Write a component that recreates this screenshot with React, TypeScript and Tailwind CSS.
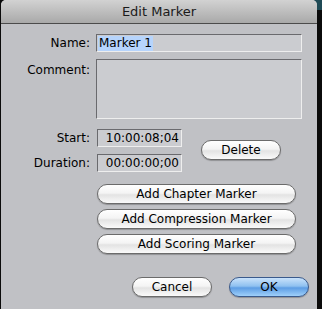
import React from 'react';

const font = { fontFamily: '"Lucida Grande", "DejaVu Sans", "Liberation Sans", sans-serif' };

function AquaButton({ label, width, primary }: { label: string; width: string; primary?: boolean }) {
  return (
    <button
      className={`${width} h-[20px] rounded-full border text-[12px] leading-none text-black flex items-center justify-center shadow-[0_1px_1px_rgba(0,0,0,0.25)] ${
        primary
          ? 'border-[#3a5a8c] bg-[linear-gradient(to_bottom,#c9e2fb_0%,#8fc1f0_45%,#5d9de4_55%,#9fd0fa_100%)]'
          : 'border-[#6b6b6b] bg-[linear-gradient(to_bottom,#ffffff_0%,#f4f4f4_45%,#e3e3e3_55%,#fafafa_100%)]'
      }`}
    >
      {label}
    </button>
  );
}

export default function App() {
  return (
    <div className="w-[322px] h-[309px] bg-[#0b0b0b] relative overflow-hidden" style={font}>
      {/* backdrop behind the sheet */}
      <div className="absolute right-0 top-0 w-[60px] h-[10px] bg-[#1f4a55]" />
      <div className="relative ml-[1px] w-[316px] h-[309px] bg-[#c0c1c5] rounded-t-[5px] overflow-hidden">
        {/* Title bar */}
        <div className="h-[24px] bg-[linear-gradient(to_bottom,#d2d2d2,#a9a9a9)] border-b border-[#4b4b4b] flex items-center justify-center">
          <span className="text-[13px] text-[#1a1a1a]">Edit Marker</span>
        </div>

        <div className="pt-[10px] text-[12px] text-black">
          {/* Name */}
          <div className="flex items-center h-[18px]">
            <span className="w-[89px] text-right">Name:</span>
            <div className="ml-[6px] w-[206px] h-[18px] bg-[#cbccd0] border border-[#6a6a6e] border-r-[#eeeeee] border-b-[#eeeeee] flex items-center px-[1px]">
              <span className="bg-[#b6d4fc] leading-[15px] px-[1px]">Marker 1</span>
            </div>
          </div>

          {/* Comment */}
          <div className="flex mt-[7px]">
            <span className="w-[89px] text-right pt-[2px]">Comment:</span>
            <div className="ml-[6px] w-[206px] h-[60px] bg-[#cbccd0] border border-[#6a6a6e] border-r-[#eeeeee] border-b-[#eeeeee]" />
          </div>

          {/* Start / Duration / Delete */}
          <div className="flex mt-[10px]">
            <div className="flex flex-col gap-[7px]">
              <div className="flex items-center h-[18px]">
                <span className="w-[89px] text-right">Start:</span>
                <div className="ml-[7px] w-[85px] h-[18px] bg-[#cbccd0] border border-[#6a6a6e] border-r-[#eeeeee] border-b-[#eeeeee] flex items-center justify-end pr-[2px]">
                  10:00:08;04
                </div>
              </div>
              <div className="flex items-center h-[18px]">
                <span className="w-[89px] text-right">Duration:</span>
                <div className="ml-[7px] w-[85px] h-[18px] bg-[#cbccd0] border border-[#6a6a6e] border-r-[#eeeeee] border-b-[#eeeeee] flex items-center justify-end pr-[2px]">
                  00:00:00;00
                </div>
              </div>
            </div>
            <div className="ml-[19px] mt-[11px]">
              <AquaButton label="Delete" width="w-[80px]" />
            </div>
          </div>

          {/* Marker buttons */}
          <div className="ml-[96px] mt-[12px] flex flex-col gap-[5px]">
            <AquaButton label="Add Chapter Marker" width="w-[199px]" />
            <AquaButton label="Add Compression Marker" width="w-[199px]" />
            <AquaButton label="Add Scoring Marker" width="w-[199px]" />
          </div>

          {/* Footer */}
          <div className="mt-[23px] flex justify-end gap-[17px] pr-[8px]">
            <AquaButton label="Cancel" width="w-[80px]" />
            <AquaButton label="OK" width="w-[80px]" primary />
          </div>
        </div>
      </div>
    </div>
  );
}
